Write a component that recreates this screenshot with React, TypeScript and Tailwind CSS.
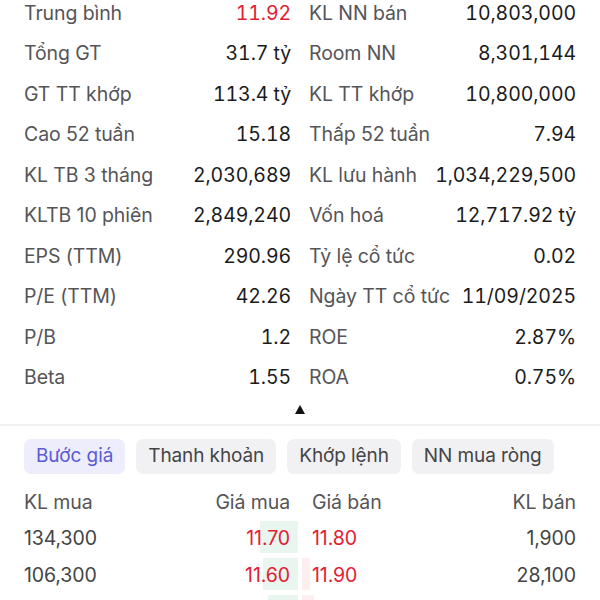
import React from 'react';

type Stat = { label: string; value: string; red?: boolean };

const leftStats: Stat[] = [
  { label: 'Trung bình', value: '11.92', red: true },
  { label: 'Tổng GT', value: '31.7 tỷ' },
  { label: 'GT TT khớp', value: '113.4 tỷ' },
  { label: 'Cao 52 tuần', value: '15.18' },
  { label: 'KL TB 3 tháng', value: '2,030,689' },
  { label: 'KLTB 10 phiên', value: '2,849,240' },
  { label: 'EPS (TTM)', value: '290.96' },
  { label: 'P/E (TTM)', value: '42.26' },
  { label: 'P/B', value: '1.2' },
  { label: 'Beta', value: '1.55' },
];

const rightStats: Stat[] = [
  { label: 'KL NN bán', value: '10,803,000' },
  { label: 'Room NN', value: '8,301,144' },
  { label: 'KL TT khớp', value: '10,800,000' },
  { label: 'Thấp 52 tuần', value: '7.94' },
  { label: 'KL lưu hành', value: '1,034,229,500' },
  { label: 'Vốn hoá', value: '12,717.92 tỷ' },
  { label: 'Tỷ lệ cổ tức', value: '0.02' },
  { label: 'Ngày TT cổ tức', value: '11/09/2025' },
  { label: 'ROE', value: '2.87%' },
  { label: 'ROA', value: '0.75%' },
];

const tabs = ['Bước giá', 'Thanh khoản', 'Khớp lệnh', 'NN mua ròng'];

const book = [
  { buyVol: '134,300', buy: '11.70', sell: '11.80', sellVol: '1,900', buyBar: 38, sellBar: 0 },
  { buyVol: '106,300', buy: '11.60', sell: '11.90', sellVol: '28,100', buyBar: 35, sellBar: 8 },
];

const StatCell: React.FC<{ stat: Stat }> = ({ stat }) => (
  <div className="flex items-center justify-between h-[40.5px] whitespace-nowrap">
    <span className="text-[#555558]">{stat.label}</span>
    <span className={`tabular-nums ${stat.red ? 'text-[#e3202f]' : 'text-[#1b1b1d]'}`}>{stat.value}</span>
  </div>
);

export default function App() {
  return (
    <div className="w-[600px] h-[600px] overflow-hidden bg-white text-[19.5px] font-['Inter','Noto_Sans',sans-serif] tracking-[-0.1px]">
      {/* Stats grid */}
      <div className="-mt-[7px] px-6 grid grid-cols-2 gap-x-[18px]">
        {leftStats.map((s, i) => (
          <React.Fragment key={s.label}>
            <StatCell stat={s} />
            <StatCell stat={rightStats[i]} />
          </React.Fragment>
        ))}
      </div>

      <div className="flex justify-center h-[22px] items-center">
        <svg width="10" height="9" viewBox="0 0 10 9">
          <path d="M5 0 L10 9 L0 9 Z" fill="#111" />
        </svg>
      </div>

      <div className="h-[2px] bg-[#f0f0f2] mt-[4px]" />

      {/* Tabs */}
      <div className="flex gap-[11px] px-6 mt-[13px] text-[19px]">
        {tabs.map((t, i) => (
          <div
            key={t}
            className={`h-[35px] px-[12px] flex items-center rounded-[7px] ${
              i === 0 ? 'bg-[#ededfb] text-[#5b5bd6]' : 'bg-[#f1f1f3] text-[#444446]'
            }`}
          >
            {t}
          </div>
        ))}
      </div>

      {/* Order book */}
      <div className="mt-[12px] px-6">
        <div className="grid grid-cols-2 h-[34px] items-center text-[#555558]">
          <div className="flex justify-between pr-[10px]">
            <span>KL mua</span>
            <span>Giá mua</span>
          </div>
          <div className="flex justify-between pl-[12px]">
            <span>Giá bán</span>
            <span>KL bán</span>
          </div>
        </div>
        {book.map(r => (
          <div key={r.buyVol} className="grid grid-cols-2 h-[37px]">
            <div className="relative flex items-center justify-between pr-[10px]">
              <div className="absolute right-[2px] top-[1px] bottom-[4px] bg-[#e9f6f0]" style={{ width: r.buyBar }} />
              <span className="relative text-[#444446]">{r.buyVol}</span>
              <span className="relative text-[#e3202f]">{r.buy}</span>
            </div>
            <div className="relative flex items-center justify-between pl-[12px]">
              <div className="absolute left-[2px] top-[1px] bottom-[4px] bg-[#fdeef0]" style={{ width: r.sellBar }} />
              <span className="relative text-[#e3202f]">{r.sell}</span>
              <span className="relative text-[#444446]">{r.sellVol}</span>
            </div>
          </div>
        ))}
        {/* next level, only the depth bars peek in at the bottom */}
        <div className="grid grid-cols-2 h-[37px]">
          <div className="relative">
            <div className="absolute right-[2px] top-[1px] bottom-[4px] w-[30px] bg-[#e9f6f0]" />
          </div>
          <div className="relative">
            <div className="absolute left-[2px] top-[1px] bottom-[4px] w-[12px] bg-[#fdeef0]" />
          </div>
        </div>
      </div>
    </div>
  );
}
